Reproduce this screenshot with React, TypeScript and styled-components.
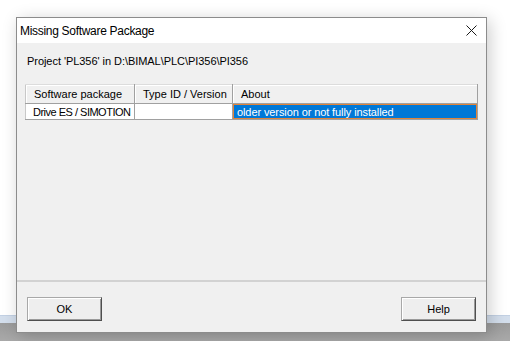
import * as React from "react";
import styled, { createGlobalStyle } from "styled-components";

const GlobalStyle = createGlobalStyle`
  html, body {
    margin: 0;
    padding: 0;
    background: #ffffff;
  }
  body {
    font-family: "Liberation Sans", Arial, sans-serif;
    font-size: 11px;
    color: #000;
  }
`;

type Column = { title: string; width: number };

const columns: Column[] = [
  { title: "Software package", width: 109 },
  { title: "Type ID / Version", width: 98 },
  { title: "About", width: 245 },
];

const rows = [
  { pkg: "Drive ES / SIMOTION", version: "", about: "older version or not fully installed" },
];

const Desktop = styled.div`
  position: relative;
  width: 510px;
  height: 341px;
  overflow: hidden;
  display: flex;
  flex-direction: column;
  background: #ffffff;
`;

const BackWindow = styled.div`
  flex: 1;
  background: #ffffff;
`;

const StatusStrip = styled.div`
  height: 7px;
  background: #d3deec;
  border-top: 1px solid #c2d0e3;
`;

const Taskbar = styled.div`
  height: 18px;
  background: linear-gradient(#9b9b9b, #a9a9a9);
`;

/* the dialog is a window floating on the desktop */
const Dialog = styled.div`
  position: absolute;
  left: 16px;
  top: 17px;
  width: 471px;
  height: 316px;
  box-sizing: border-box;
  border: 1px solid #8c8c8c;
  background: #f0f0f0;
  box-shadow: 3px 3px 16px rgba(0, 0, 0, 0.2);
  display: flex;
  flex-direction: column;
`;

const TitleBar = styled.div`
  height: 25px;
  flex: none;
  background: #ffffff;
  display: flex;
  align-items: center;
  justify-content: space-between;
  padding-left: 3px;
`;

const Title = styled.span`
  font-size: 12px;
  letter-spacing: -0.3px;
  color: #000;
`;

const CloseButton = styled.div`
  width: 30px;
  height: 25px;
  display: flex;
  align-items: center;
  justify-content: center;
`;

const Body = styled.div`
  flex: 1;
  display: flex;
  flex-direction: column;
  padding: 12px 9px 0 8px;
`;

const ProjectLine = styled.div`
  margin-left: 2px;
  line-height: 13px;
  height: 13px;
  letter-spacing: -0.05px;
  white-space: nowrap;
`;

const Grid = styled.table`
  margin-top: 16px;
  border-collapse: collapse;
  table-layout: fixed;
  width: 452px;
  border-left: 1px solid #c8c8c8;
  border-bottom: 1px solid #a0a0a0;
`;

const HeadCell = styled.th<{ $w: number }>`
  width: ${(p) => p.$w}px;
  height: 19px;
  box-sizing: border-box;
  padding: 0 0 0 8px;
  text-align: left;
  font-weight: normal;
  background: #f0f0f0;
  border-top: 1px solid #dcdcdc;
  border-right: 1px solid #a0a0a0;
  border-bottom: 1px solid #a0a0a0;
  box-shadow: inset 1px 1px #ffffff;
  white-space: nowrap;
  overflow: hidden;
`;

const Cell = styled.td<{ $selected?: boolean }>`
  height: 16px;
  box-sizing: border-box;
  padding: 0 0 0 ${(p) => (p.$selected ? 4 : 7)}px;
  white-space: nowrap;
  overflow: hidden;
  letter-spacing: ${(p) => (p.$selected ? "-0.1px" : "-0.5px")};
  background: ${(p) => (p.$selected ? "#0078d7" : "#ffffff")};
  color: ${(p) => (p.$selected ? "#ffffff" : "#000000")};
  border-right: 1px solid #a0a0a0;
  box-shadow: ${(p) => (p.$selected ? "inset 0 0 0 1px #e0843a" : "none")};
`;

const Footer = styled.div`
  flex: none;
  border-top: 2px solid #d2d2d2;
  padding: 15px 10px 11px 10px;
  display: flex;
  justify-content: space-between;
`;

const Button = styled.button`
  width: 75px;
  height: 24px;
  box-sizing: border-box;
  font-family: "Liberation Sans", Arial, sans-serif;
  font-size: 11px;
  color: #000;
  background: #eeeeee;
  border: 1px solid;
  border-color: #a8a8a8 #4f4f4f #4f4f4f #a8a8a8;
  box-shadow: inset 1px 1px #ffffff, inset -1px -1px #9a9a9a;
  padding: 0;
`;

export default function App() {
  return (
    <>
      <GlobalStyle />
      <Desktop>
        <BackWindow />
        <StatusStrip />
        <Taskbar />
        <Dialog>
          <TitleBar>
            <Title>Missing Software Package</Title>
            <CloseButton>
              <svg width="11" height="11" viewBox="0 0 11 11">
                <path d="M0.5 0.5 L10.5 10.5 M10.5 0.5 L0.5 10.5" stroke="#1a1a1a" strokeWidth="1" />
              </svg>
            </CloseButton>
          </TitleBar>
          <Body>
            <ProjectLine>Project 'PL356' in D:\BIMAL\PLC\PI356\PI356</ProjectLine>
            <Grid>
              <thead>
                <tr>
                  {columns.map((c) => (
                    <HeadCell key={c.title} $w={c.width}>
                      {c.title}
                    </HeadCell>
                  ))}
                </tr>
              </thead>
              <tbody>
                {rows.map((r) => (
                  <tr key={r.pkg}>
                    <Cell>{r.pkg}</Cell>
                    <Cell>{r.version}</Cell>
                    <Cell $selected>{r.about}</Cell>
                  </tr>
                ))}
              </tbody>
            </Grid>
          </Body>
          <Footer>
            <Button>OK</Button>
            <Button>Help</Button>
          </Footer>
        </Dialog>
      </Desktop>
    </>
  );
}
